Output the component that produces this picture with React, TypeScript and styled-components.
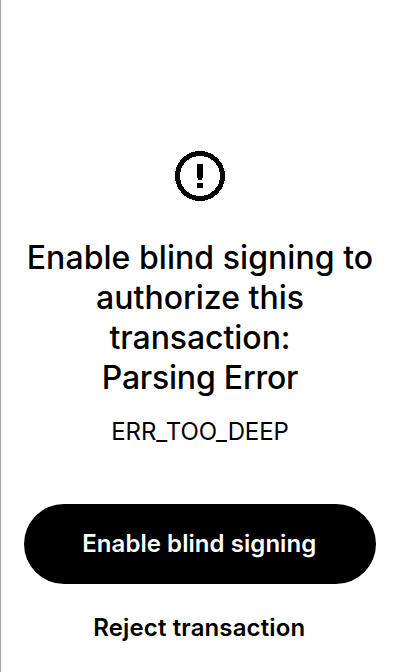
import React from "react";
import styled, { createGlobalStyle } from "styled-components";

const GlobalStyle = createGlobalStyle`
  * { box-sizing: border-box; }
  body { margin: 0; background: #fff; }
`;

const Screen = styled.main`
  width: 400px;
  height: 672px;
  display: flex;
  flex-direction: column;
  align-items: center;
  padding: 151px 24px 0 23px;
  border-left: 1px solid #a6a6a6;
  background: #fff;
  color: #000;
  font-family: Inter, sans-serif;
  overflow: hidden;
`;

const WarningIcon = styled.svg`
  flex: none;
  width: 50px;
  height: 50px;
  shape-rendering: crispEdges;
`;

const Title = styled.h1`
  margin: 37px 0 0;
  font-size: 32px;
  font-weight: 500;
  line-height: 40px;
  text-align: center;
  white-space: nowrap;
`;

const TitleLine = styled.span<{ $tracking?: number }>`
  display: block;
  letter-spacing: ${({ $tracking = 0 }) => $tracking}px;
`;

const ErrorCode = styled.p`
  margin: 16px 0 0;
  font-size: 24px;
  font-weight: 400;
  line-height: 36px;
  letter-spacing: -0.1px;
`;

const Actions = styled.div`
  width: 352px;
  margin-top: 54px;
  display: flex;
  flex-direction: column;
`;

const ActionButton = styled.button<{ $primary?: boolean }>`
  height: ${({ $primary }) => ($primary ? 80 : 88)}px;
  padding: 0 1.5px 0 0;
  border: 0;
  border-radius: 40px;
  background: ${({ $primary }) => ($primary ? "#000" : "transparent")};
  color: ${({ $primary }) => ($primary ? "#fff" : "#000")};
  font: 600 24px/36px Inter, sans-serif;
  letter-spacing: ${({ $primary }) => ($primary ? 0.06 : 0.12)}px;
`;

export default function App() {
  return (
    <>
      <GlobalStyle />
      <Screen>
        <WarningIcon viewBox="0 0 50 50" aria-hidden="true">
          <circle cx="25" cy="25" r="22.5" fill="none" stroke="#000" strokeWidth="5" />
          <path d="M22 13h6v14h-1v2h-4v-2h-1zM22 32h6v5h-6z" />
        </WarningIcon>
        <Title>
          <TitleLine $tracking={0.05}>Enable blind signing to</TitleLine>
          <TitleLine>authorize this</TitleLine>
          <TitleLine $tracking={-0.06}>transaction:</TitleLine>
          <TitleLine $tracking={-0.22}>Parsing Error</TitleLine>
        </Title>
        <ErrorCode>ERR_TOO_DEEP</ErrorCode>
        <Actions>
          <ActionButton $primary>Enable blind signing</ActionButton>
          <ActionButton>Reject transaction</ActionButton>
        </Actions>
      </Screen>
    </>
  );
}
